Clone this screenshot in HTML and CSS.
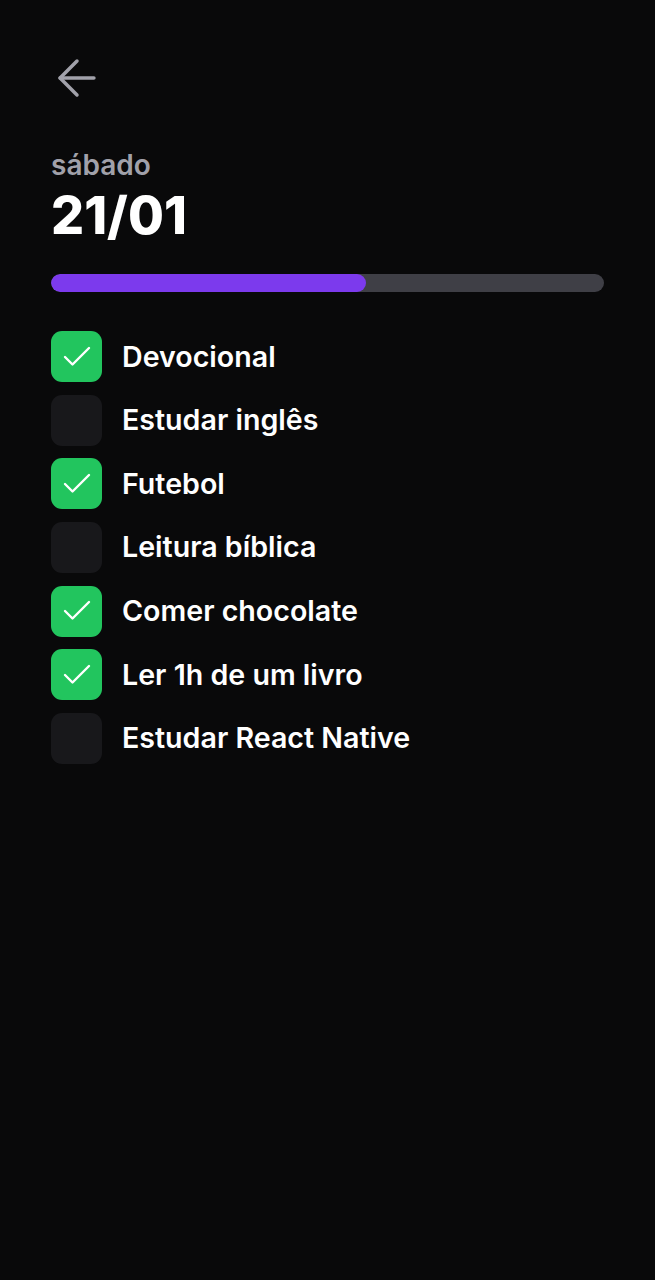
FILE: index.html
```html
<!DOCTYPE html>
<html lang="pt-BR">
<head>
<meta charset="utf-8">
<link rel="stylesheet" href="styles.css">
</head>
<body>
<main class="screen">
  <button class="back" aria-label="Voltar">
    <svg width="58" height="58" viewBox="0 0 24 24" fill="none" stroke="#a1a1aa" stroke-width="1.45" stroke-linecap="round" stroke-linejoin="round"><line x1="19" y1="12" x2="5" y2="12"/><polyline points="12 19 5 12 12 5"/></svg>
  </button>
  <p class="weekday">sábado</p>
  <h1 class="date">21/01</h1>
  <div class="progress"><div class="progress-fill" style="width:57%"></div></div>
  <ul class="habits">
    <li class="habit"><span class="box checked"><svg width="36" height="36" viewBox="0 0 24 24" fill="none" stroke="#fff" stroke-width="1.6" stroke-linecap="round" stroke-linejoin="round"><polyline points="20 6 9 17 4 12"/></svg></span><span class="label">Devocional</span></li>
    <li class="habit"><span class="box"></span><span class="label">Estudar inglês</span></li>
    <li class="habit"><span class="box checked"><svg width="36" height="36" viewBox="0 0 24 24" fill="none" stroke="#fff" stroke-width="1.6" stroke-linecap="round" stroke-linejoin="round"><polyline points="20 6 9 17 4 12"/></svg></span><span class="label">Futebol</span></li>
    <li class="habit"><span class="box"></span><span class="label">Leitura bíblica</span></li>
    <li class="habit"><span class="box checked"><svg width="36" height="36" viewBox="0 0 24 24" fill="none" stroke="#fff" stroke-width="1.6" stroke-linecap="round" stroke-linejoin="round"><polyline points="20 6 9 17 4 12"/></svg></span><span class="label">Comer chocolate</span></li>
    <li class="habit"><span class="box checked"><svg width="36" height="36" viewBox="0 0 24 24" fill="none" stroke="#fff" stroke-width="1.6" stroke-linecap="round" stroke-linejoin="round"><polyline points="20 6 9 17 4 12"/></svg></span><span class="label">Ler 1h de um livro</span></li>
    <li class="habit"><span class="box"></span><span class="label">Estudar React Native</span></li>
  </ul>
</main>
</body>
</html>
```

FILE: styles.css
```css
* { box-sizing: border-box; }
html, body {
  margin: 0;
  padding: 0;
  background: #09090a;
  height: 100%;
}
body {
  font-family: Inter, "Noto Sans", sans-serif;
  color: #fff;
}
.screen {
  padding: 49px 51px 0 51px;
  display: flex;
  flex-direction: column;
}
.back {
  background: none;
  border: 0;
  padding: 0;
  margin: 0 0 42px -3px;
  width: 58px;
  height: 58px;
  display: block;
  cursor: pointer;
}
.back svg { display: block; }
.weekday {
  margin: 0;
  font-size: 28px;
  line-height: 32px;
  font-weight: 600;
  color: #a1a1aa;
}
.date {
  margin: 5px 0 0 0;
  font-size: 52px;
  line-height: 60px;
  font-weight: 800;
  color: #fff;
}
.progress {
  margin-top: 28px;
  width: 553px;
  height: 18px;
  border-radius: 9px;
  background: #3f3f46;
  overflow: hidden;
}
.progress-fill {
  height: 100%;
  border-radius: 9px;
  background: #7c3aed;
}
.habits {
  list-style: none;
  margin: 39px 0 0 0;
  padding: 0;
  display: flex;
  flex-direction: column;
  gap: 12.67px;
}
.habit {
  display: flex;
  align-items: center;
  gap: 20px;
  height: 51px;
}
.box {
  width: 51px;
  height: 51px;
  border-radius: 11px;
  background: #18181b;
  display: flex;
  align-items: center;
  justify-content: center;
  flex: none;
}
.box.checked { background: #22c55e; }
.box svg { display: block; }
.label {
  font-size: 28.6px;
  line-height: 36px;
  font-weight: 600;
  color: #fff;
}
```
